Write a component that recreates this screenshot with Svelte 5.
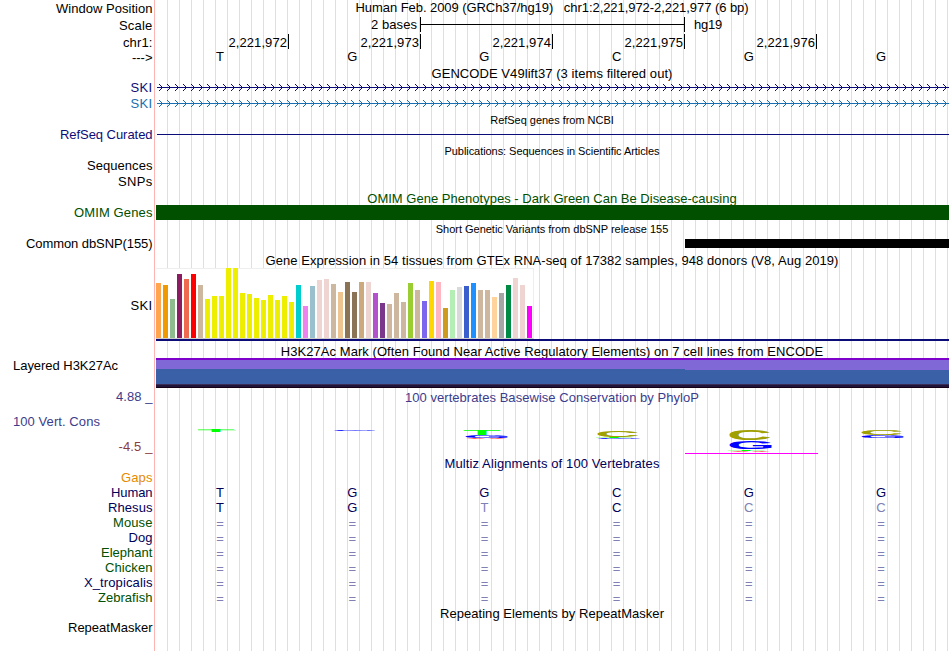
<script>
  // Spreads letter spacing so a caption fills the given advance width.
  function fit(node, width) {
    if (!width) return;
    const natural = node.getBoundingClientRect().width;
    node.style.letterSpacing = (width - natural) / node.textContent.length + 'px';
  }

  // [text, colour class, row height, text width, left aligned]
  const labels = [
    ['Window Position', 'black', 17, 96.5],
    ['Scale', 'black', 17, 33.5],
    ['chr1:', 'black', 15, 29.5],
    ['--->', 'black', 30, 20.5],
    ['SKI', 'navy', 16, 22],
    ['SKI', 'blue', 31, 22],
    ['RefSeq Curated', 'navy', 31, 92.5],
    ['Sequences', 'black', 16, 65.5],
    ['SNPs', 'black', 31, 34.5],
    ['OMIM Genes', 'green', 31, 78.5],
    ['Common dbSNP(155)', 'black', 62, 126.5],
    ['SKI', 'black', 60, 22],
    ['Layered H3K27Ac', 'black', 31, 105, true],
    ['4.88 _', 'slate', 25, 36.5],
    ['100 Vert. Cons', 'slate', 25, 87, true],
    ['-4.5 _', 'maroon', 31, 34],
    ['Gaps', 'orange', 15, 31.5],
    ['Human', 'ink', 15, 41.5],
    ['Rhesus', 'ink', 15, 44.5],
    ['Mouse', 'green', 15, 39.5],
    ['Dog', 'ink', 15, 24],
    ['Elephant', 'green', 15, 51.5],
    ['Chicken', 'green', 15, 47.5],
    ['X_tropicalis', 'ink', 15, 68.5],
    ['Zebrafish', 'green', 30, 54.5],
    ['RepeatMasker', 'black', 15, 84.5]
  ];

  const positions = ['2,221,972', '2,221,973', '2,221,974', '2,221,975', '2,221,976'];
  const bases = [...'TGGCGG'];
  const rhesus = [...'TGTCCC'];
  const species = ['Mouse', 'Dog', 'Elephant', 'Chicken', 'X_tropicalis', 'Zebrafish'];
  const arrows = Array.from({ length: 99 }, (_, i) => 4 + i * 8);
  // One pixel per row: column offset of the chevron stroke.
  const chevron = [0, 1, 2, 3, 2, 1, 0];

  const tissues = [
    [55, '#ffa54f'], [53, '#ee9a00'], [39, '#8fbc8f'], [64, '#8b1c62'], [59, '#ee6a50'], [64, '#ff0000'],
    [53, '#cdb79e'], [39, '#eeee00'], [42, '#eeee00'], [42, '#eeee00'], [70, '#eeee00'], [70, '#eeee00'],
    [45, '#eeee00'], [44, '#eeee00'], [40, '#eeee00'], [38, '#eeee00'], [43, '#eeee00'], [38, '#eeee00'],
    [42, '#eeee00'], [36, '#eeee00'], [53, '#00cdcd'], [32, '#ee82ee'], [52, '#9ac0cd'], [58, '#eed5d2'],
    [59, '#eed5d2'], [54, '#cdb79e'], [46, '#eec591'], [56, '#8b7355'], [46, '#8b7355'], [56, '#cdaa7d'],
    [56, '#eed5d2'], [45, '#b452cd'], [35, '#7a378b'], [34, '#cdb79e'], [45, '#cdb79e'], [36, '#cdb79e'],
    [55, '#9acd32'], [48, '#cdb79e'], [37, '#7a67ee'], [57, '#ffd700'], [56, '#ffb6c1'], [30, '#cd9b1d'],
    [48, '#b4eeb4'], [51, '#d9d9d9'], [52, '#3a5fcd'], [55, '#1e90ff'], [48, '#cdb79e'], [48, '#cdb79e'],
    [41, '#ffd39b'], [45, '#a6a6a6'], [53, '#008b45'], [60, '#eed5d2'], [53, '#eed5d2'], [32, '#ff00ff']
  ];

  // Stacked conservation letters: base, left edge, bottom edge, height.
  const logo = [
    ['T', 42, 2, 2], ['G', 176, 1, 1],
    ['T', 308, 5, 5], ['G', 308, 8.3, 3.1], ['A', 309, 9, 0.8],
    ['C', 440, 7.2, 7.2], ['T', 440, 8, 0.8], ['G', 440, 8.8, 0.8],
    ['C', 572, 10, 10], ['G', 572, 19, 8], ['T', 572, 21, 1.6], ['A', 573, 21.9, 0.7],
    ['C', 704, 5, 5], ['G', 704, 8, 3]
  ];
  const baseColor = { A: '#ff0000', C: '#a0a000', G: '#0000ff', T: '#00ff00' };
</script>

{#snippet title(text, width, kind = '')}
  <h2 class={kind}><span use:fit={width}>{text}</span></h2>
{/snippet}

{#snippet arrowLine(color)}
  <svg class="gene" width="794" height="7" shape-rendering="crispEdges" fill={color}>
    <rect x="2" y="3" width="792" height="1" />
    {#each arrows as x}
      <path d={chevron.map((dx, y) => `M${x + dx} ${y}h1v1h-1z`).join('')} />
    {/each}
  </svg>
{/snippet}

<main>
  <aside>
    {#each labels as [text, color, height, width, left]}
      <div class="label {color}" class:left style="height:{height}px"><span use:fit={width}>{text}</span></div>
    {/each}
  </aside>

  <section class="data">
    {@render title('Human Feb. 2009 (GRCh37/hg19)   chr1:2,221,972-2,221,977 (6 bp)', 393)}
    <div class="scale">
      <span class="amount"><span use:fit={46}>2 bases</span></span>
      <i class="ruler"></i>
      <span use:fit={28}>hg19</span>
    </div>
    <div class="ticks">
      {#each positions as p}<div><span use:fit={58.5}>{p}</span></div>{/each}
    </div>
    <div class="bases">{#each bases as b}<span>{b}</span>{/each}</div>

    {@render title('GENCODE V49lift37 (3 items filtered out)', 241, 'gencode')}
    {@render arrowLine('#0c0c78')}
    {@render arrowLine('#1a6fb0')}

    {@render title('RefSeq genes from NCBI', 123.5, 'small refseq')}
    <div class="refline"></div>
    {@render title('Publications: Sequences in Scientific Articles', 215, 'small pubs')}

    {@render title('OMIM Gene Phenotypes - Dark Green Can Be Disease-causing', 369.5, 'green omim')}
    <div class="omimbar"></div>

    {@render title('Short Genetic Variants from dbSNP release 155', 232.5, 'small snp')}
    <div class="snpbar"></div>

    {@render title('Gene Expression in 54 tissues from GTEx RNA-seq of 17382 samples, 948 donors (V8, Aug 2019)', 573, 'gtex')}
    <div class="chart">
      {#each tissues as [height, color]}<i style="height:{height}px;background:{color}"></i>{/each}
    </div>
    <div class="gtexline"></div>

    {@render title('H3K27Ac Mark (Often Found Near Active Regulatory Elements) on 7 cell lines from ENCODE', 542.5, 'h3k')}
    <svg class="signal" width="793" height="30" shape-rendering="crispEdges">
      <rect width="793" height="2" fill="#7d00cb" />
      <rect y="2" width="793" height="10" fill="#8069d6" />
      <path d="M0 11h529v1h264v14H0z" fill="#3a60a8" />
      <rect y="26" width="793" height="1" fill="#392d55" />
      <rect y="27" width="793" height="2" fill="#20143a" />
      <rect y="29" width="793" height="1" fill="#160018" />
    </svg>

    {@render title('100 vertebrates Basewise Conservation by PhyloP', 294, 'slate phylop')}
    <svg class="logo" width="794" height="36">
      <rect x="43" y="10" width="38" height="1" fill="#00ff00" opacity="0.22" />
      {#each logo as [base, x, y, h]}
        <text transform="translate({x} {y + 10}) scale(0.955 {h / (base === 'C' || base === 'G' ? 47 : 45)})" y={base === 'C' || base === 'G' ? -1 : 0} fill={baseColor[base]}>{base}</text>
      {/each}
      <rect x="530" y="33" width="133" height="1" fill="#ff00ff" />
    </svg>

    {@render title('Multiz Alignments of 100 Vertebrates', 215, 'ink multiz')}
    <div class="bases human ink">{#each bases as b}<span>{b}</span>{/each}</div>
    <div class="bases ink">{#each rhesus as b, i}<span class:diff={b !== bases[i]}>{b}</span>{/each}</div>
    {#each species as _}
      <div class="bases diff gap">{#each bases as _b}<span>=</span>{/each}</div>
    {/each}
    {@render title('Repeating Elements by RepeatMasker', 224, 'repeats')}
  </section>
</main>

<style>
  :global(body) { margin: 0; background: #fff; }
  main {
    display: flex;
    width: 950px;
    height: 651px;
    overflow: hidden;
    font: 13px/15px 'Liberation Sans', Arial, sans-serif;
    color: #000;
    white-space: pre;
  }
  aside { width: 154px; flex: none; padding-top: 1px; box-sizing: border-box; }
  .label { display: flex; justify-content: flex-end; padding-right: 1.5px; }
  .label.left { justify-content: flex-start; padding-left: 13px; }
  .data {
    width: 794px;
    flex: none;
    border-left: 1px solid #ffb4b4;
    display: flex;
    flex-direction: column;
    background:
      linear-gradient(#fff, #fff) 0 0 / 1px 100% no-repeat,
      linear-gradient(to right, #dcdcf8 1px, transparent 1px) 0 0 / 12px 100%;
  }
  h2 { margin: 0; height: 15px; font: inherit; text-align: center; flex: none; }
  h2.small { font-size: 11px; }

  .black { color: #000; }
  .navy { color: #0c0c78; }
  .blue { color: #1a6fb0; }
  .green { color: #005000; }
  .slate { color: #3c3c8c; }
  .maroon { color: #8c3c3c; }
  .orange { color: #e68a00; }
  .ink { color: #00005a; }

  .scale { display: flex; height: 15px; margin-top: 2px; }
  .amount { width: 265px; padding-right: 3px; box-sizing: border-box; text-align: right; }
  .ruler {
    width: 265px;
    margin-right: 9px;
    box-sizing: border-box;
    border: solid #000;
    border-width: 0 1px;
    background: linear-gradient(#000, #000) 0 7px / 100% 1px no-repeat;
  }
  .ticks { display: flex; height: 15px; margin-top: 2px; }
  .ticks div {
    width: 132px;
    height: 15px;
    box-sizing: border-box;
    padding: 1px 1px 0 0;
    border-right: 1px solid #000;
    text-align: right;
  }
  .ticks div:first-child { width: 134px; }
  .bases { display: flex; height: 15px; width: 793px; margin-left: -1px; flex: none; box-sizing: border-box; }
  .bases span { flex: 1; text-align: center; }
  .bases.gap { padding-top: 1px; }
  .diff { color: #8080b4; }

  .gencode { margin-top: 2px; }
  .gene { display: block; flex: none; margin-top: 3px; }
  .gene + .gene { margin-top: 9px; }
  .refseq { margin-top: 6px; }
  .refline { height: 1px; margin: 6px 0 0 2px; background: #0c0c78; }
  .pubs { margin-top: 9px; }
  h2.omim { margin-top: 32px; height: 14px; overflow: hidden; }
  .omimbar { height: 15px; margin-left: 1px; background: #005000; }
  .snp { margin-top: 2px; }
  .snpbar { height: 9px; margin: 2px 0 0 530px; background: #000; }
  .gtex { margin-top: 5px; }
  .chart {
    display: flex;
    align-items: flex-end;
    gap: 2px;
    width: 378px;
    height: 71px;
    margin-left: 1px;
    box-sizing: border-box;
    border-right: 1px solid #eee;
    border-bottom: 1px solid #ccc;
    background: linear-gradient(#eee, #eee) 0 0 / 100% 1px no-repeat #fff;
  }
  .chart i { width: 5px; flex: none; }
  .gtexline { height: 2px; margin-left: 1px; background: #0c0c78; }
  h2.h3k { margin-top: 3px; height: 14px; overflow: hidden; }
  .signal { display: block; flex: none; margin-left: 1px; }
  .phylop { margin-top: 2px; }
  .logo { display: block; flex: none; margin-top: 15px; font: bold 65px 'Liberation Sans', Arial, sans-serif; }
  .multiz { margin-top: 0; }
  .human { margin-top: 14px; }
  .repeats { margin-top: 1px; }
</style>
